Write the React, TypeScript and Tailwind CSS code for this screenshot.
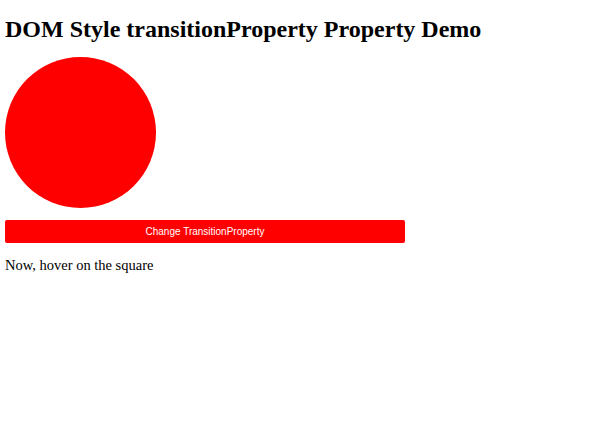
export default function App() {
  return (
    <div className="w-[600px] h-[432px] bg-white px-[5px] font-['Liberation_Serif',serif] text-black">
      <h1 className="pt-[17px] text-[24px] leading-[24px] font-bold">DOM Style transitionProperty Property Demo</h1>
      <div className="mt-[16px] w-[151px] h-[151px] rounded-full bg-[#ff0000]" />
      <button className="mt-[12px] w-[400px] h-[23px] rounded-[2px] bg-[#ff0000] text-white text-[10px] font-['Liberation_Sans',sans-serif] flex items-center justify-center">
        Change TransitionProperty
      </button>
      <p className="mt-[13px] text-[14.5px] leading-[18px]">Now, hover on the square</p>
    </div>
  )
}
